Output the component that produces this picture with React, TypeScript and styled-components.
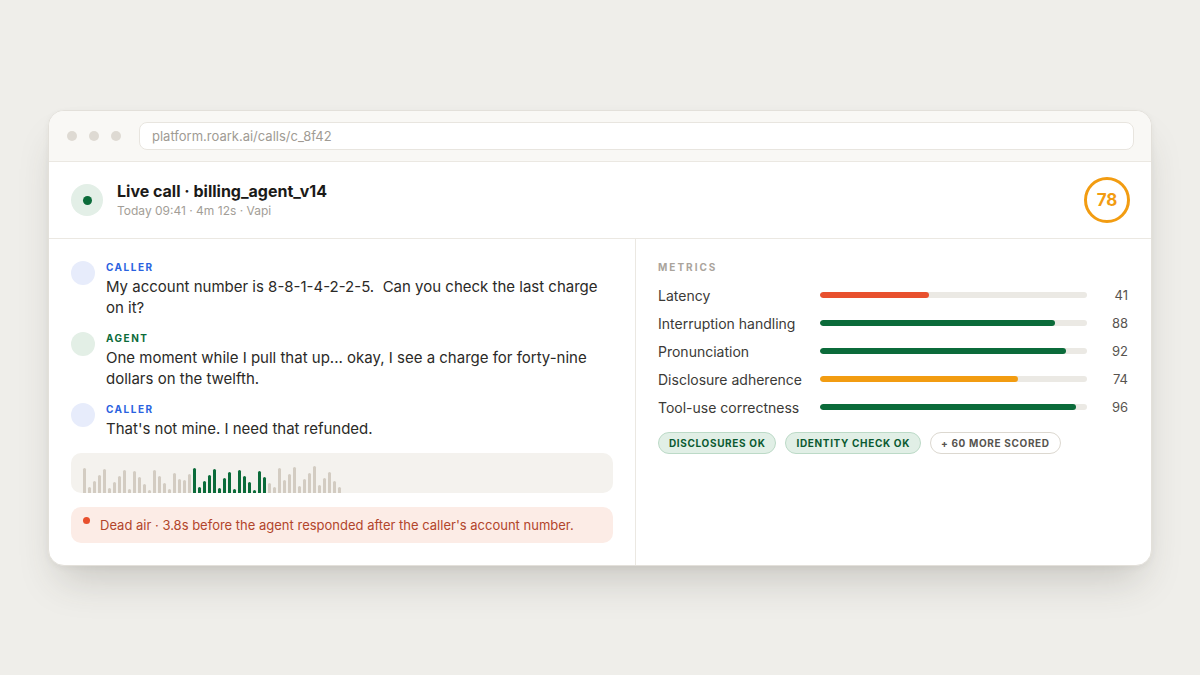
import React from "react";
import styled, { createGlobalStyle } from "styled-components";

const Global = createGlobalStyle`
  html, body { margin: 0; padding: 0; }
  body {
    background: #efeeea;
    font-family: Inter, "Noto Sans", "Liberation Sans", sans-serif;
    -webkit-font-smoothing: antialiased;
  }
  * { box-sizing: border-box; }
`;

const Page = styled.div`
  width: 1200px;
  height: 675px;
  padding: 110px 48px 0 48px;
`;

const Window = styled.div`
  width: 1104px;
  height: 456px;
  background: #ffffff;
  border: 1px solid #e3e0da;
  border-radius: 16px;
  overflow: hidden;
  box-shadow: 0 24px 40px -12px rgba(60, 55, 45, 0.22), 0 2px 6px rgba(60, 55, 45, 0.05);
  display: flex;
  flex-direction: column;
`;

const TitleBar = styled.div`
  height: 51px;
  flex: none;
  background: #f9f8f5;
  border-bottom: 1px solid #ebe8e2;
  display: flex;
  align-items: center;
  padding: 0 17px 0 18px;
  gap: 12px;
`;

const Dots = styled.div`
  display: flex;
  gap: 12px;
  margin-right: 6px;
`;

const Dot = styled.span`
  width: 10px;
  height: 10px;
  border-radius: 50%;
  background: #dedad3;
`;

const Url = styled.div`
  flex: 1;
  height: 28px;
  background: #ffffff;
  border: 1px solid #e8e5df;
  border-radius: 8px;
  display: flex;
  align-items: center;
  padding: 0 12px;
  font-size: 13px;
  color: #a09b94;
`;

const Header = styled.div`
  height: 77px;
  flex: none;
  border-bottom: 1px solid #ebe8e2;
  display: flex;
  align-items: center;
  padding: 0 21px 0 22px;
`;

const LiveIcon = styled.div`
  width: 32px;
  height: 32px;
  border-radius: 50%;
  background: #e3efe7;
  display: flex;
  align-items: center;
  justify-content: center;
  margin-right: 14px;
  &::after {
    content: "";
    width: 9px;
    height: 9px;
    border-radius: 50%;
    background: #0b6b3a;
  }
`;

const HeadText = styled.div`
  flex: 1;
  display: flex;
  flex-direction: column;
  gap: 2px;
`;

const Title = styled.div`
  font-size: 16px;
  font-weight: 700;
  color: #1b1a18;
  line-height: 20px;
`;

const Sub = styled.div`
  font-size: 12px;
  color: #a39e97;
  line-height: 16px;
`;

const Score = styled.div`
  width: 46px;
  height: 46px;
  border-radius: 50%;
  border: 3px solid #f29c11;
  color: #f29c11;
  font-size: 17px;
  font-weight: 700;
  display: flex;
  align-items: center;
  justify-content: center;
`;

const Body = styled.div`
  flex: 1;
  display: grid;
  grid-template-columns: 587px 1fr;
`;

const Left = styled.div`
  border-right: 1px solid #ebe8e2;
  padding: 22px 22px 22px 22px;
  display: flex;
  flex-direction: column;
`;

const Messages = styled.div`
  display: flex;
  flex-direction: column;
  gap: 14px;
  margin-bottom: 14px;
`;

const Msg = styled.div`
  display: flex;
  gap: 11px;
`;

const Avatar = styled.div<{ $agent?: boolean }>`
  width: 24px;
  height: 24px;
  flex: none;
  border-radius: 50%;
  background: ${(p) => (p.$agent ? "#e3efe6" : "#e7ecfb")};
`;

const MsgBody = styled.div`
  display: flex;
  flex-direction: column;
`;

const Role = styled.div<{ $agent?: boolean }>`
  font-size: 10px;
  font-weight: 700;
  letter-spacing: 1.5px;
  line-height: 12px;
  color: ${(p) => (p.$agent ? "#0b6b3a" : "#2a62e0")};
`;

const MsgText = styled.div`
  font-size: 15px;
  line-height: 21px;
  color: #2b2a27;
  margin-top: 3px;
`;

const Wave = styled.div`
  height: 40px;
  background: #f4f2ee;
  border-radius: 10px;
  padding: 0 12px;
  display: flex;
  align-items: flex-end;
  gap: 2px;
  overflow: hidden;
  margin-bottom: 14px;
`;

const Bar = styled.span<{ $on?: boolean }>`
  width: 3px;
  flex: none;
  border-radius: 2px 2px 0 0;
  background: ${(p) => (p.$on ? "#0b6b3a" : "#d3ccc2")};
`;

const Alert = styled.div`
  height: 36px;
  background: #fcece6;
  border-radius: 10px;
  display: flex;
  align-items: center;
  padding: 0 12px;
  gap: 10px;
  font-size: 13px;
  color: #b2452b;
`;

const AlertDot = styled.span`
  width: 7px;
  height: 7px;
  flex: none;
  border-radius: 50%;
  background: #e8502e;
  align-self: flex-start;
  margin-top: 10px;
`;

const Right = styled.div`
  padding: 22px 23px 22px 22px;
  display: flex;
  flex-direction: column;
`;

const SectionLabel = styled.div`
  font-size: 10px;
  font-weight: 700;
  letter-spacing: 2px;
  color: #aaa49c;
  line-height: 12px;
  margin-bottom: 8px;
`;

const MetricRow = styled.div`
  height: 28px;
  display: grid;
  grid-template-columns: 162px 267px 1fr;
  align-items: center;
`;

const MetricName = styled.div`
  font-size: 14px;
  color: #3b3a37;
`;

const Track = styled.div`
  height: 6px;
  border-radius: 3px;
  background: #ebe9e4;
  overflow: hidden;
`;

const Fill = styled.div<{ $color: string }>`
  height: 100%;
  border-radius: 3px;
  background: ${(p) => p.$color};
`;

const Value = styled.div`
  text-align: right;
  font-size: 13px;
  color: #57544f;
`;

const Chips = styled.div`
  display: flex;
  gap: 9px;
  margin-top: 11px;
`;

const Chip = styled.span<{ $ok?: boolean }>`
  height: 22px;
  padding: 0 10px;
  border-radius: 11px;
  display: inline-flex;
  align-items: center;
  font-size: 10px;
  font-weight: 700;
  letter-spacing: 0.65px;
  background: ${(p) => (p.$ok ? "#e1efe6" : "#ffffff")};
  border: 1px solid ${(p) => (p.$ok ? "#bcdac7" : "#dcd8d0")};
  color: ${(p) => (p.$ok ? "#0b5a31" : "#57544f")};
`;

const heights = [
  25, 6, 12, 18, 24, 5, 11, 17, 23, 4, 22, 16, 9, 3, 23, 17, 10, 4, 20, 14, 13, 19,
  25, 6, 12, 18, 24, 5, 15, 21, 4, 23, 17, 11, 3, 22, 16,
  10, 6, 25, 13, 19, 26, 7, 14, 20, 27, 8, 15, 21, 12, 6,
];

const metrics = [
  { name: "Latency", v: 41, c: "#e8502e" },
  { name: "Interruption handling", v: 88, c: "#0b6b3a" },
  { name: "Pronunciation", v: 92, c: "#0b6b3a" },
  { name: "Disclosure adherence", v: 74, c: "#f29c11" },
  { name: "Tool-use correctness", v: 96, c: "#0b6b3a" },
];

const messages = [
  { agent: false, text: "My account number is 8-8-1-4-2-2-5.\u00a0 Can you check the last charge on it?" },
  { agent: true, text: "One moment while I pull that up... okay, I see a charge for forty-nine dollars on the twelfth." },
  { agent: false, text: "That's not mine. I need that refunded." },
];

export default function App() {
  return (
    <>
      <Global />
      <Page>
        <Window>
          <TitleBar>
            <Dots>
              <Dot />
              <Dot />
              <Dot />
            </Dots>
            <Url>platform.roark.ai/calls/c_8f42</Url>
          </TitleBar>
          <Header>
            <LiveIcon />
            <HeadText>
              <Title>Live call · billing_agent_v14</Title>
              <Sub>Today 09:41 · 4m 12s · Vapi</Sub>
            </HeadText>
            <Score>78</Score>
          </Header>
          <Body>
            <Left>
              <Messages>
                {messages.map((m, i) => (
                  <Msg key={i}>
                    <Avatar $agent={m.agent} />
                    <MsgBody>
                      <Role $agent={m.agent}>{m.agent ? "AGENT" : "CALLER"}</Role>
                      <MsgText>{m.text}</MsgText>
                    </MsgBody>
                  </Msg>
                ))}
              </Messages>
              <Wave>
                {heights.map((h, i) => (
                  <Bar key={i} $on={i >= 22 && i <= 36} style={{ height: h }} />
                ))}
              </Wave>
              <Alert>
                <AlertDot />
                <span>Dead air · 3.8s before the agent responded after the caller's account number.</span>
              </Alert>
            </Left>
            <Right>
              <SectionLabel>METRICS</SectionLabel>
              {metrics.map((m) => (
                <MetricRow key={m.name}>
                  <MetricName>{m.name}</MetricName>
                  <Track>
                    <Fill $color={m.c} style={{ width: `${m.v}%` }} />
                  </Track>
                  <Value>{m.v}</Value>
                </MetricRow>
              ))}
              <Chips>
                <Chip $ok>DISCLOSURES OK</Chip>
                <Chip $ok>IDENTITY CHECK OK</Chip>
                <Chip>+ 60 MORE SCORED</Chip>
              </Chips>
            </Right>
          </Body>
        </Window>
      </Page>
    </>
  );
}
